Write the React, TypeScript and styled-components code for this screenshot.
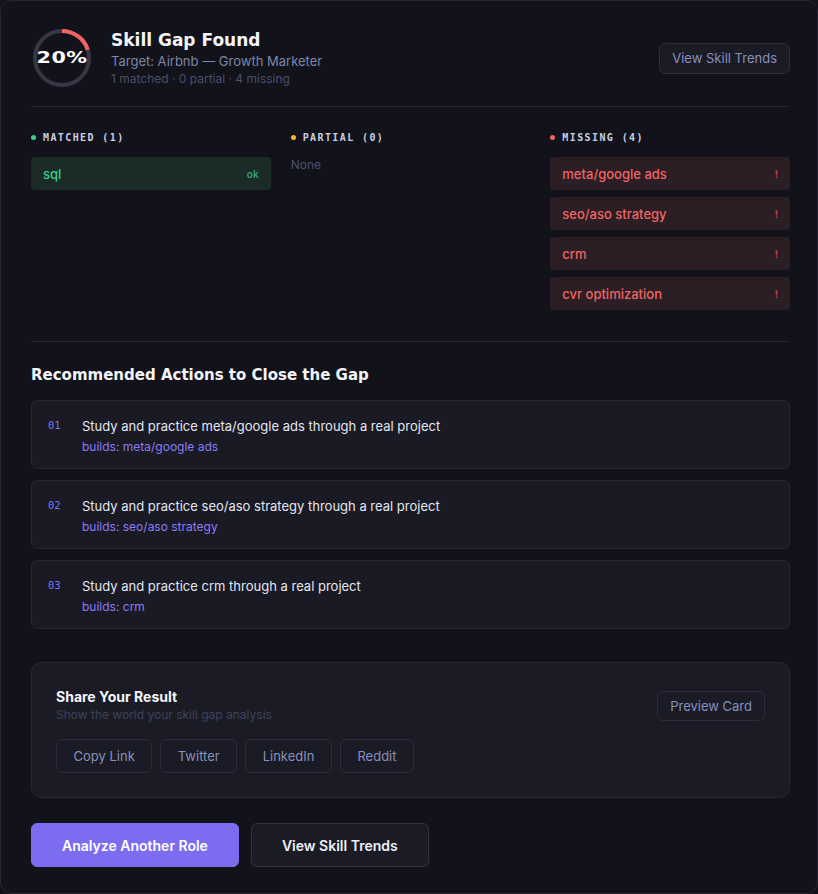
import React from "react";
import styled, { createGlobalStyle } from "styled-components";

const Global = createGlobalStyle`
  html, body { margin: 0; padding: 0; background: #12121a; }
  body { font-family: Inter, "Noto Sans", sans-serif; -webkit-font-smoothing: antialiased; }
  * { box-sizing: border-box; }
`;

const DISPLAY = `"DejaVu Sans", "Noto Sans", sans-serif`;
const MONO = `"DejaVu Sans Mono", "Liberation Mono", monospace`;

const Shell = styled.div`
  width: 818px;
  min-height: 894px;
  border: 1px solid #262633;
  border-radius: 12px;
  background: #12121a;
  padding: 26px 27px 26px 30px;
  display: flex;
  flex-direction: column;
`;

const Header = styled.div`
  display: flex;
  align-items: center;
  gap: 18px;
  padding-bottom: 17px;
  border-bottom: 1px solid #262633;
`;

const RingWrap = styled.div`
  position: relative;
  width: 62px;
  height: 62px;
  flex: none;
`;

const RingLabel = styled.span`
  position: absolute;
  inset: 0;
  display: flex;
  align-items: center;
  justify-content: center;
  font-family: ${DISPLAY};
  font-weight: 800;
  font-size: 15px;
  letter-spacing: 0.3px;
  color: #ffffff;
  transform: scaleX(1.38);
`;

const TitleBlock = styled.div`
  flex: 1;
  display: flex;
  flex-direction: column;
`;

const Title = styled.h1`
  margin: 0;
  font-family: ${DISPLAY};
  font-weight: 700;
  font-size: 17px;
  line-height: 23px;
  color: #f4f5fa;
`;

const Subtitle = styled.div`
  font-size: 13px;
  line-height: 18px;
  color: #7d86a8;
`;

const Meta = styled.div`
  font-size: 12px;
  line-height: 18px;
  color: #4a5069;
`;

const GhostButton = styled.button<{ $h?: number; $px?: number }>`
  height: ${(p) => p.$h ?? 31}px;
  padding: 0 ${(p) => p.$px ?? 12}px;
  border: 1px solid #2c2c3c;
  border-radius: 6px;
  background: #1b1b25;
  color: #8590bd;
  font-family: Inter, sans-serif;
  font-size: 13px;
  cursor: pointer;
`;

const Columns = styled.div`
  display: grid;
  grid-template-columns: repeat(3, 1fr);
  gap: 20px;
  padding: 24px 0 31px;
  border-bottom: 1px solid #262633;
`;

const Column = styled.div`
  display: flex;
  flex-direction: column;
  gap: 7px;
`;

const ColHead = styled.div`
  display: flex;
  align-items: center;
  gap: 7px;
  height: 12px;
  margin-bottom: 7px;
  font-family: ${MONO};
  font-weight: 700;
  font-size: 10px;
  letter-spacing: 1.4px;
  color: #c9d0e2;
`;

const Dot = styled.span<{ $c: string }>`
  width: 5px;
  height: 5px;
  border-radius: 50%;
  background: ${(p) => p.$c};
`;

const Chip = styled.div<{ $kind: "ok" | "miss" }>`
  height: 33px;
  display: flex;
  align-items: center;
  justify-content: space-between;
  padding: 0 12px;
  border-radius: 4px;
  background: ${(p) => (p.$kind === "ok" ? "#1a2b28" : "#2b1e25")};
  color: ${(p) => (p.$kind === "ok" ? "#3ccf8c" : "#f06464")};
  font-size: 13px;
  font-weight: 500;
`;

const ChipMark = styled.span<{ $kind: "ok" | "miss" }>`
  font-size: 10px;
  font-weight: 600;
  color: ${(p) => (p.$kind === "ok" ? "#2fa574" : "#c24e55")};
`;

const Empty = styled.div`
  font-size: 12px;
  line-height: 16px;
  color: #4a5069;
`;

const SectionTitle = styled.h2`
  margin: 24px 0 16px;
  font-family: ${DISPLAY};
  font-weight: 700;
  font-size: 15px;
  line-height: 18px;
  color: #f4f5fa;
`;

const ActionList = styled.div`
  display: flex;
  flex-direction: column;
  gap: 11px;
`;

const ActionCard = styled.div`
  display: flex;
  gap: 20px;
  padding: 16px 16px 13px;
  background: #1a1a24;
  border: 1px solid #272734;
  border-radius: 6px;
`;

const ActionNum = styled.span`
  width: 14px;
  font-family: ${MONO};
  font-size: 10.5px;
  line-height: 16px;
  color: #7b78ee;
`;

const ActionBody = styled.div`
  display: flex;
  flex-direction: column;
  gap: 4px;
`;

const ActionText = styled.div`
  font-size: 13px;
  line-height: 18px;
  color: #e3e6f2;
`;

const Builds = styled.div`
  font-size: 12px;
  line-height: 16px;
  color: #8b7cf4;
`;

const ShareBox = styled.div`
  margin-top: 33px;
  padding: 24px;
  background: #1b1b25;
  border: 1px solid #272734;
  border-radius: 10px;
`;

const ShareTop = styled.div`
  display: flex;
  align-items: center;
  justify-content: space-between;
`;

const ShareTitle = styled.div`
  font-size: 14px;
  font-weight: 700;
  line-height: 19px;
  color: #f4f5fa;
`;

const ShareSub = styled.div`
  font-size: 12px;
  line-height: 18px;
  color: #3e4259;
`;

const ShareRow = styled.div`
  display: flex;
  gap: 8px;
  margin-top: 15px;
`;

const BottomRow = styled.div`
  display: flex;
  gap: 12px;
  margin-top: 25px;
`;

const BigButton = styled.button<{ $primary?: boolean }>`
  height: 44px;
  padding: 0 30px;
  border-radius: 6px;
  border: 1px solid ${(p) => (p.$primary ? "#7c6cf0" : "#31313f")};
  background: ${(p) => (p.$primary ? "#7c6cf0" : "#1b1b25")};
  color: ${(p) => (p.$primary ? "#ffffff" : "#eef0f8")};
  font-family: Inter, sans-serif;
  font-size: 14px;
  font-weight: 600;
  cursor: pointer;
`;

function Ring({ pct }: { pct: number }) {
  const r = 27;
  const c = 2 * Math.PI * r;
  return (
    <RingWrap>
      <svg width="62" height="62" viewBox="0 0 62 62">
        <circle cx="31" cy="31" r={r} fill="none" stroke="#363644" strokeWidth="4" />
        <circle
          cx="31"
          cy="31"
          r={r}
          fill="none"
          stroke="#f06464"
          strokeWidth="4"
          strokeDasharray={`${(c * pct) / 100} ${c}`}
          transform="rotate(-90 31 31)"
        />
      </svg>
      <RingLabel>{pct}%</RingLabel>
    </RingWrap>
  );
}

const missing = ["meta/google ads", "seo/aso strategy", "crm", "cvr optimization"];
const actions = ["meta/google ads", "seo/aso strategy", "crm"];

export default function App() {
  return (
    <>
      <Global />
      <Shell>
        <Header>
          <Ring pct={20} />
          <TitleBlock>
            <Title>Skill Gap Found</Title>
            <Subtitle>Target: Airbnb — Growth Marketer</Subtitle>
            <Meta>1 matched · 0 partial · 4 missing</Meta>
          </TitleBlock>
          <GhostButton>View Skill Trends</GhostButton>
        </Header>

        <Columns>
          <Column>
            <ColHead>
              <Dot $c="#3ccf8c" />
              MATCHED (1)
            </ColHead>
            <Chip $kind="ok">
              sql
              <ChipMark $kind="ok">ok</ChipMark>
            </Chip>
          </Column>
          <Column>
            <ColHead>
              <Dot $c="#f5b52e" />
              PARTIAL (0)
            </ColHead>
            <Empty>None</Empty>
          </Column>
          <Column>
            <ColHead>
              <Dot $c="#f06464" />
              MISSING (4)
            </ColHead>
            {missing.map((m) => (
              <Chip key={m} $kind="miss">
                {m}
                <ChipMark $kind="miss">!</ChipMark>
              </Chip>
            ))}
          </Column>
        </Columns>

        <SectionTitle>Recommended Actions to Close the Gap</SectionTitle>
        <ActionList>
          {actions.map((a, i) => (
            <ActionCard key={a}>
              <ActionNum>{String(i + 1).padStart(2, "0")}</ActionNum>
              <ActionBody>
                <ActionText>Study and practice {a} through a real project</ActionText>
                <Builds>builds: {a}</Builds>
              </ActionBody>
            </ActionCard>
          ))}
        </ActionList>

        <ShareBox>
          <ShareTop>
            <div>
              <ShareTitle>Share Your Result</ShareTitle>
              <ShareSub>Show the world your skill gap analysis</ShareSub>
            </div>
            <GhostButton $h={30}>Preview Card</GhostButton>
          </ShareTop>
          <ShareRow>
            {["Copy Link", "Twitter", "LinkedIn", "Reddit"].map((s) => (
              <GhostButton key={s} $h={34} $px={16.5}>
                {s}
              </GhostButton>
            ))}
          </ShareRow>
        </ShareBox>

        <BottomRow>
          <BigButton $primary>Analyze Another Role</BigButton>
          <BigButton>View Skill Trends</BigButton>
        </BottomRow>
      </Shell>
    </>
  );
}
